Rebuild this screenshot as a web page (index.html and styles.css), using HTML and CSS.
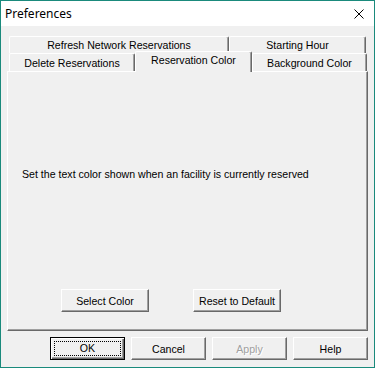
FILE: index.html
```html
<!DOCTYPE html>
<html lang="en">
<head>
    <meta charset="UTF-8">
    <title>Preferences</title>
    <link rel="stylesheet" href="styles.css">
</head>
<body>

<div class="window">
    <div class="titlebar">
        <span class="title">Preferences</span>
        <svg class="close" width="10" height="10" viewBox="0 0 10 10">
            <path d="M0.5 0.5 L9.5 9.5 M9.5 0.5 L0.5 9.5" stroke="#000" stroke-width="1" fill="none"/>
        </svg>
    </div>

    <div class="content">
        <div class="tabs">
            <div class="tabrow">
                <div class="tab w-refresh">Refresh Network Reservations</div>
                <div class="tab w-hour">Starting Hour</div>
            </div>
            <div class="tabrow front">
                <div class="tab w-delete">Delete Reservations</div>
                <div class="tab active w-color">Reservation Color</div>
                <div class="tab w-bg">Background Color</div>
            </div>
        </div>

        <div class="panel">
            <p class="hint">Set the text color shown when an facility is currently reserved</p>
            <div class="panel-buttons">
                <button class="btn wide">Select Color</button>
                <button class="btn wide">Reset to Default</button>
            </div>
        </div>

        <div class="dialog-buttons">
            <button class="btn default"><span class="focus">OK</span></button>
            <button class="btn">Cancel</button>
            <button class="btn disabled">Apply</button>
            <button class="btn">Help</button>
        </div>
    </div>
</div>

</body>
</html>
```

FILE: styles.css
```css
*{margin: 0; padding: 0; box-sizing: border-box;}
html,body{
    width: 375px;
    height: 368px;
    overflow: hidden;
}
body{
    font-family: "Liberation Sans", Arial, sans-serif;
    font-size: 10.6px;
    color: #000;
    background: #f0f0f0;
}
.window{
    width: 375px;
    height: 368px;
    border: 1px solid #1a8a7c;
    background: #f0f0f0;
    display: flex;
    flex-direction: column;
}
.titlebar{
    height: 25px;
    background: #fff;
    display: flex;
    align-items: center;
    justify-content: space-between;
    padding: 0 10px 0 4px;
    flex-shrink: 0;
}
.title{
    font-family: "Noto Sans", "Liberation Sans", sans-serif;
    font-size: 12px;
}
.close{
    display: block;
    margin-top: 1px;
}
.content{
    padding: 10px 6px 0 6px;
}

/* tabs */
.tabs{
    margin-left: 2px;
}
.tabrow{
    display: flex;
}
.tabrow.front{
    align-items: flex-start;
}
.tab{
    height: 17px;
    line-height: 16px;
    text-align: center;
    white-space: nowrap;
    border-top: 1px solid #fff;
    border-left: 1px solid #fff;
    border-right: 1px solid #696969;
    border-top-left-radius: 2px;
    border-top-right-radius: 2px;
    box-shadow: inset -1px 0 #a0a0a0;
    background: #f0f0f0;
}
.tabrow.front .tab{
    height: 18px;
    line-height: 18px;
}
.tabrow.front .tab.active{
    height: 21px;
    line-height: 17px;
    margin-top: -2px;
    margin-bottom: -1px;
    position: relative;
    z-index: 1;
}
.w-refresh{ width: 220px; }
.w-hour{ width: 137px; }
.w-delete{ width: 126px; }
.w-color{ width: 117px; }
.w-bg{ width: 115px; }

/* panel */
.panel{
    width: 361px;
    height: 260px;
    border-top: 1px solid #fff;
    border-left: 1px solid #fff;
    border-right: 1px solid #696969;
    border-bottom: 1px solid #696969;
    box-shadow: inset -1px -1px #a0a0a0;
    padding: 95px 0 0 14px;
}
.hint{
    height: 15px;
    line-height: 15px;
}
.panel-buttons{
    display: flex;
    gap: 44px;
    margin-top: 107px;
    padding-left: 39px;
}

/* buttons */
.btn{
    width: 75px;
    height: 23px;
    font-family: "Liberation Sans", Arial, sans-serif;
    font-size: 10.6px;
    color: #000;
    background: #f0f0f0;
    border-top: 1px solid #fff;
    border-left: 1px solid #fff;
    border-right: 1px solid #696969;
    border-bottom: 1px solid #696969;
    box-shadow: inset -1px -1px #a0a0a0;
    outline: none;
}
.btn.wide{
    width: 88px;
}
.btn.default{
    border: 1px solid #000;
    box-shadow: inset 1px 1px #fff, inset -1px -1px #696969, inset -2px -2px #a0a0a0;
    padding: 3px;
}
.focus{
    display: block;
    height: 15px;
    line-height: 13px;
    border: 1px dotted #000;
}
.btn.disabled{
    color: #a0a0a0;
    text-shadow: 1px 1px #fff;
}
.dialog-buttons{
    display: flex;
    justify-content: flex-end;
    gap: 6px;
    margin-top: 6px;
}
```
